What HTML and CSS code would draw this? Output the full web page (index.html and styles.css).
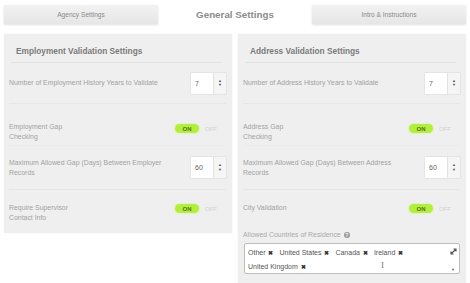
FILE: index.html
```html
<!DOCTYPE html>
<html lang="en">
<head>
    <meta charset="UTF-8">
    <title>General Settings</title>
    <link rel="stylesheet" href="styles.css">
</head>
<body>
    <div class="tabs">
        <div class="tab">Agency Settings</div>
        <div class="tab tab-active">General Settings</div>
        <div class="tab">Intro &amp; Instructions</div>
    </div>

    <div class="panels">
        <section class="panel">
            <h2 class="panel-title">Employment Validation Settings</h2>

            <div class="row">
                <label class="row-label">Number of Employment History Years to Validate</label>
                <div class="spin">
                    <span class="spin-value">7</span>
                    <span class="spin-btns"><i>&#9650;</i><i>&#9660;</i></span>
                </div>
            </div>

            <div class="row row-toggle">
                <label class="row-label">Employment Gap<br>Checking</label>
                <div class="toggle"><span class="toggle-on">ON</span><span class="toggle-off">OFF</span></div>
            </div>

            <div class="row row-tall">
                <label class="row-label">Maximum Allowed Gap (Days) Between Employer<br>Records</label>
                <div class="spin">
                    <span class="spin-value">60</span>
                    <span class="spin-btns"><i>&#9650;</i><i>&#9660;</i></span>
                </div>
            </div>

            <div class="row row-toggle row-last">
                <label class="row-label">Require Supervisor<br>Contact Info</label>
                <div class="toggle"><span class="toggle-on">ON</span><span class="toggle-off">OFF</span></div>
            </div>
        </section>

        <section class="panel panel-long">
            <h2 class="panel-title">Address Validation Settings</h2>

            <div class="row">
                <label class="row-label">Number of Address History Years to Validate</label>
                <div class="spin">
                    <span class="spin-value">7</span>
                    <span class="spin-btns"><i>&#9650;</i><i>&#9660;</i></span>
                </div>
            </div>

            <div class="row row-toggle">
                <label class="row-label">Address Gap<br>Checking</label>
                <div class="toggle"><span class="toggle-on">ON</span><span class="toggle-off">OFF</span></div>
            </div>

            <div class="row row-tall">
                <label class="row-label">Maximum Allowed Gap (Days) Between Address<br>Records</label>
                <div class="spin">
                    <span class="spin-value">60</span>
                    <span class="spin-btns"><i>&#9650;</i><i>&#9660;</i></span>
                </div>
            </div>

            <div class="row row-toggle row-last">
                <label class="row-label">City Validation</label>
                <div class="toggle"><span class="toggle-on">ON</span><span class="toggle-off">OFF</span></div>
            </div>

            <div class="countries">
                <div class="countries-label">Allowed Countries of Residence <span class="help">?</span></div>
                <div class="tagbox">
                    <div class="tags">
                        <span class="tag">Other <b>&#10006;</b></span>
                        <span class="tag">United States <b>&#10006;</b></span>
                        <span class="tag">Canada <b>&#10006;</b></span>
                        <span class="tag">Ireland <b>&#10006;</b></span>
                        <span class="tag">United Kingdom <b>&#10006;</b></span>
                        <span class="caret">I</span>
                    </div>
                    <div class="tagbox-side">
                        <svg width="7" height="7" viewBox="0 0 7 7"><path d="M1 6 L6 1 M3.5 1 H6 V3.5 M1 3.5 V6 H3.5" stroke="#555" stroke-width="1.2" fill="none"/></svg>
                        <span class="tagbox-arrow">&#9660;</span>
                    </div>
                </div>
            </div>
        </section>
    </div>
</body>
</html>
```

FILE: styles.css
```css
* {
    margin: 0;
    padding: 0;
    box-sizing: border-box;
}

body {
    font-family: "Liberation Sans", Arial, sans-serif;
    background: #fff;
    color: #999;
    padding: 5px 4px 0 4px;
    overflow: hidden;
}

.tabs {
    display: grid;
    grid-template-columns: 154px 1fr 154px;
    height: 19px;
}

.tab {
    display: flex;
    align-items: center;
    justify-content: center;
    font-size: 6.6px;
    color: #8a8a8a;
    background: linear-gradient(#f2f2f2, #e6e6e6);
    box-shadow: 0 1px 2px rgba(0, 0, 0, 0.12);
}

.tab-active {
    background: none;
    box-shadow: none;
    font-size: 9.8px;
    font-weight: bold;
    color: #8c8c8c;
    padding-bottom: 1px;
}

.panels {
    display: grid;
    grid-template-columns: 228px 228px;
    gap: 6px;
    margin-top: 10px;
    align-items: start;
}

.panel {
    background: #efefef;
    padding: 0 6px 2px 5px;
    box-shadow: 0 0 1px rgba(0, 0, 0, 0.08);
}

.panel-long {
    min-height: 260px;
}

.panel-title {
    font-size: 8.3px;
    font-weight: bold;
    color: #7b7b7b;
    padding: 12px 0 6px 5px;
    margin: 0 4px 0 2px;
    border-bottom: 1px solid #e2e2e2;
}

.row {
    display: flex;
    align-items: center;
    justify-content: space-between;
    height: 41px;
    border-bottom: 1px solid #e6e6e6;
}

.row-toggle {
    height: 42px;
    align-items: flex-start;
    padding-top: 18px;
    border-bottom-color: #ebebeb;
}

.row-toggle .toggle {
    margin-top: 2px;
}

.row-tall {
    height: 44px;
}

.row-last {
    border-bottom: none;
    height: 41px;
    padding-top: 13px;
}

.row-last .toggle {
    margin-top: 1px;
}

.row-label {
    font-size: 6.9px;
    line-height: 9.5px;
    color: #a2a2a2;
}

.spin {
    display: flex;
    height: 21px;
    box-shadow: 0 0 1px rgba(0, 0, 0, 0.25);
}

.spin-value {
    width: 22px;
    background: #fff;
    font-size: 7px;
    color: #666;
    display: flex;
    align-items: center;
    padding-left: 4px;
}

.spin-btns {
    width: 13px;
    background: #f5f5f5;
    border-left: 1px solid #e2e2e2;
    display: flex;
    flex-direction: column;
    align-items: center;
    justify-content: center;
    font-size: 4px;
    color: #555;
    line-height: 4.5px;
}

.spin-btns i {
    font-style: normal;
}

.toggle {
    display: flex;
    align-items: center;
    gap: 6px;
    margin-right: 9px;
}

.toggle-on {
    width: 24px;
    height: 9px;
    border-radius: 5px;
    background: #b0f03a;
    box-shadow: 0 0 2px #c6f57a;
    color: #5c6e2c;
    font-size: 6px;
    font-weight: bold;
    display: flex;
    align-items: center;
    justify-content: center;
}

.toggle-off {
    font-size: 6px;
    color: #cfcfcf;
}

.countries {
    padding-bottom: 8px;
}

.countries-label {
    font-size: 6.9px;
    color: #aaa;
    display: flex;
    align-items: center;
    gap: 3px;
}

.help {
    display: inline-flex;
    align-items: center;
    justify-content: center;
    width: 6px;
    height: 6px;
    border-radius: 50%;
    background: #999;
    color: #fff;
    font-size: 5px;
    font-weight: bold;
}

.tagbox {
    display: flex;
    margin: 5px 0 0 1px;
    height: 31px;
    background: #fff;
    border: 1px solid #bdbdbd;
    border-radius: 2px;
}

.tags {
    flex: 1;
    display: flex;
    flex-wrap: wrap;
    align-content: flex-start;
    padding: 2px 0 0 3px;
    gap: 0 6px;
    position: relative;
}

.tag {
    font-size: 7px;
    line-height: 13px;
    color: #555;
}

.tag b {
    font-size: 6px;
    color: #333;
    margin-left: 1px;
}

.caret {
    position: absolute;
    left: 136px;
    top: 16px;
    font-size: 9px;
    font-family: "Liberation Serif", serif;
    color: #777;
}

.tagbox-side {
    width: 12px;
    display: flex;
    flex-direction: column;
    justify-content: space-between;
    align-items: center;
    padding: 4px 0 1px;
}

.tagbox-arrow {
    font-size: 4px;
    color: #666;
}
```
